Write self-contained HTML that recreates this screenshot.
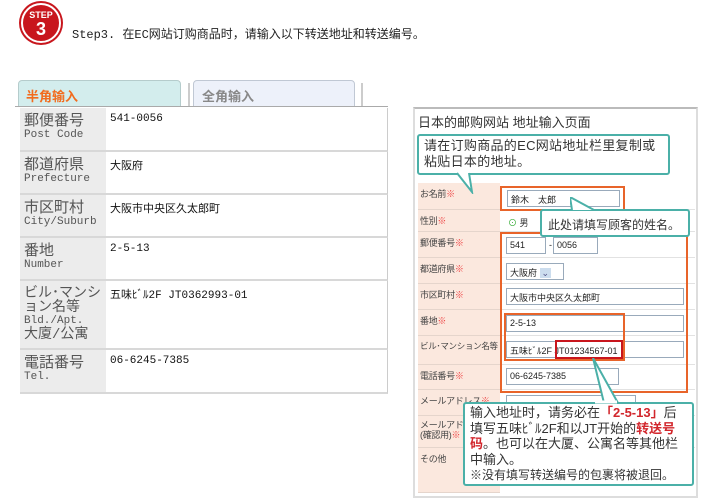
<!DOCTYPE html>
<html><head><meta charset="utf-8"><style>
*{margin:0;padding:0;box-sizing:border-box}
body{width:702px;height:500px;background:#fff;position:relative;overflow:hidden;font-family:"Liberation Sans","Noto Sans CJK SC",sans-serif;color:#222}
.a{position:absolute}
.lab{position:absolute;left:20px;width:86px;background:#ececec;font-family:"Liberation Mono","Noto Sans CJK JP",monospace;color:#555;padding:6px 0 0 4px;font-size:15px;line-height:15px;border-bottom:2px solid #d8d8d8}
.lab small{font-size:11px;display:block;line-height:13px}
.val{position:absolute;left:106px;width:282px;border-bottom:2px solid #d8d8d8;border-right:1px solid #ccc;font-size:11px;padding:5px 0 0 4px;font-family:"Liberation Mono","Noto Sans CJK JP",monospace;color:#111}
.fl{position:absolute;left:418px;width:82px;background:#fbe8de;font-size:9px;color:#444;padding:4px 0 0 2px;border-bottom:1px solid #e5d5cc;font-family:"Liberation Sans","Noto Sans CJK JP",sans-serif;white-space:nowrap;letter-spacing:-0.3px}
.fl i{color:#e44;font-style:normal}
.fr{position:absolute;left:500px;width:195px;border-bottom:1px solid #e2e2e2}
.in{position:absolute;border:1px solid #9ab;background:#fff;font-size:9px;padding:2px 3px;font-family:"Liberation Sans","Noto Sans CJK JP",sans-serif;height:17px}
.ob{position:absolute;border:2px solid #e8642a}
.co{position:absolute;border:2px solid #4bb0a8;background:#fff;border-radius:3px;color:#333}
</style></head><body>
<div class="a" style="left:21px;top:3px;width:40px;height:40px;border-radius:50%;background:#c8161d;border:2px solid #fff;box-shadow:0 0 0 2px #c8161d;color:#fff;text-align:center;font-weight:bold;font-size:9px;line-height:10px;padding-top:5px">STEP<br><span style="font-size:18px;line-height:18px">3</span></div>
<div class="a" style="left:72px;top:25px;font-size:12px;font-family:'Liberation Mono','Noto Sans CJK SC',monospace;color:#222">Step3. 在EC网站订购商品时，请输入以下转送地址和转送编号。</div>

<div class="a" style="left:18px;top:80px;width:163px;height:27px;background:#d3eded;border:1px solid #b5cccc;border-radius:4px 4px 0 0;color:#f26b1d;font-weight:bold;font-size:13px;padding:5px 0 0 7px">半角输入</div>
<div class="a" style="left:193px;top:80px;width:162px;height:27px;background:#edf1fa;border:1px solid #c0c8d4;border-radius:4px 4px 0 0;color:#888;font-weight:bold;font-size:13px;padding:5px 0 0 8px">全角输入</div>
<div class="a" style="left:188px;top:83px;width:2px;height:24px;background:#ccc"></div>
<div class="a" style="left:361px;top:83px;width:2px;height:24px;background:#ccc"></div>
<div class="a" style="left:15px;top:106px;width:373px;height:1px;background:#aaa"></div>

<div class="lab" style="top:108px;height:44px">郵便番号<small>Post Code</small></div><div class="val" style="top:108px;height:44px">541-0056</div>
<div class="lab" style="top:152px;height:43px">都道府県<small>Prefecture</small></div><div class="val" style="top:152px;height:43px">大阪府</div>
<div class="lab" style="top:195px;height:43px">市区町村<small>City/Suburb</small></div><div class="val" style="top:195px;height:43px">大阪市中央区久太郎町</div>
<div class="lab" style="top:238px;height:43px">番地<small>Number</small></div><div class="val" style="top:238px;height:43px">2-5-13</div>
<div class="lab" style="top:281px;height:69px;font-size:14px;line-height:14px">ビル･マンション名等<small>Bld./Apt.</small>大廈/公寓</div><div class="val" style="top:281px;height:69px">五味ﾋﾞﾙ2F JT0362993-01</div>
<div class="lab" style="top:350px;height:44px">電話番号<small>Tel.</small></div><div class="val" style="top:350px;height:44px">06-6245-7385</div>

<div class="a" style="left:413px;top:107px;width:285px;height:391px;border:2px solid #ddd;border-top-color:#bbb"></div>
<div class="a" style="left:418px;top:112px;font-size:13px;color:#333">日本的邮购网站 地址输入页面</div>

<div class="fl" style="top:183px;height:27px">お名前<i>※</i></div><div class="fr" style="top:183px;height:27px"></div>
<div class="fl" style="top:210px;height:22px">性別<i>※</i></div><div class="fr" style="top:210px;height:22px"></div>
<div class="fl" style="top:232px;height:26px">郵便番号<i>※</i></div><div class="fr" style="top:232px;height:26px"></div>
<div class="fl" style="top:258px;height:26px">都道府県<i>※</i></div><div class="fr" style="top:258px;height:26px"></div>
<div class="fl" style="top:284px;height:26px">市区町村<i>※</i></div><div class="fr" style="top:284px;height:26px"></div>
<div class="fl" style="top:310px;height:26px">番地<i>※</i></div><div class="fr" style="top:310px;height:26px"></div>
<div class="fl" style="top:336px;height:29px;font-size:8.5px">ビル･マンション名等</div><div class="fr" style="top:336px;height:29px"></div>
<div class="fl" style="top:365px;height:25px">電話番号<i>※</i></div><div class="fr" style="top:365px;height:25px"></div>
<div class="fl" style="top:390px;height:26px">メールアドレス<i>※</i></div><div class="fr" style="top:390px;height:26px"></div>
<div class="fl" style="top:416px;height:32px;line-height:10px">メールアドレス<br>(確認用)<i>※</i></div><div class="fr" style="top:416px;height:32px"></div>
<div class="fl" style="top:448px;height:45px">その他</div>

<div class="in" style="left:507px;top:190px;width:113px">鈴木　太郎</div>
<div class="a" style="left:508px;top:216px;font-size:9px;color:#333"><span style="color:#3a3">⊙</span> 男</div>
<div class="in" style="left:506px;top:237px;width:40px">541</div><div class="a" style="left:549px;top:240px;font-size:9px">-</div>
<div class="in" style="left:553px;top:237px;width:45px">0056</div>
<div class="in" style="left:506px;top:263px;width:58px">大阪府 <span style="color:#558;background:#cde;padding:0 2px">⌄</span></div>
<div class="in" style="left:506px;top:288px;width:178px">大阪市中央区久太郎町</div>
<div class="in" style="left:506px;top:315px;width:178px">2-5-13</div>
<div class="in" style="left:506px;top:341px;width:178px">五味ﾋﾞﾙ2F JT01234567-01</div>
<div class="in" style="left:506px;top:368px;width:113px">06-6245-7385</div>
<div class="in" style="left:506px;top:395px;width:130px"></div>

<div class="ob" style="left:500px;top:186px;width:125px;height:25px"></div>
<div class="ob" style="left:500px;top:232px;width:188px;height:161px"></div>
<div class="ob" style="left:504px;top:313px;width:121px;height:48px"></div>
<div class="a" style="left:555px;top:340px;width:68px;height:19px;border:2px solid #c8161d"></div>

<div class="co" style="left:417px;top:134px;width:253px;height:41px;font-size:13px;line-height:16px;padding:2px 5px;letter-spacing:0.3px">请在订购商品的EC网站地址栏里复制或粘贴日本的地址。</div>
<svg class="a" style="left:455px;top:172px" width="20" height="22"><path d="M2 1 L17 20 L14 1" fill="#fff" stroke="#4bb0a8" stroke-width="2"/></svg>
<div class="co" style="left:540px;top:209px;width:150px;height:28px;font-size:12px;padding:5px 6px">此处请填写顾客的姓名。</div>
<svg class="a" style="left:570px;top:197px" width="26" height="14"><path d="M2 13 L0 0 L24 13" fill="#fff" stroke="#4bb0a8" stroke-width="2"/></svg>
<div class="co" style="left:463px;top:402px;width:231px;height:84px;font-size:13px;line-height:15.5px;padding:1px 5px">输入地址时，请务必在<b style="color:#d2262c">「2-5-13」</b>后填写五味ﾋﾞﾙ2F和以JT开始的<b style="color:#d2262c">转送号码</b>。也可以在大厦、公寓名等其他栏中输入。<br><span style="white-space:nowrap;font-size:12px">※没有填写转送编号的包裹将被退回。</span></div>
<svg class="a" style="left:590px;top:358px" width="30" height="46"><path d="M3 0 L14 45 L28 45 Z" fill="#fff" stroke="#4bb0a8" stroke-width="2"/><path d="M5 44 L27 44" stroke="#fff" stroke-width="3"/></svg>
</body></html>
